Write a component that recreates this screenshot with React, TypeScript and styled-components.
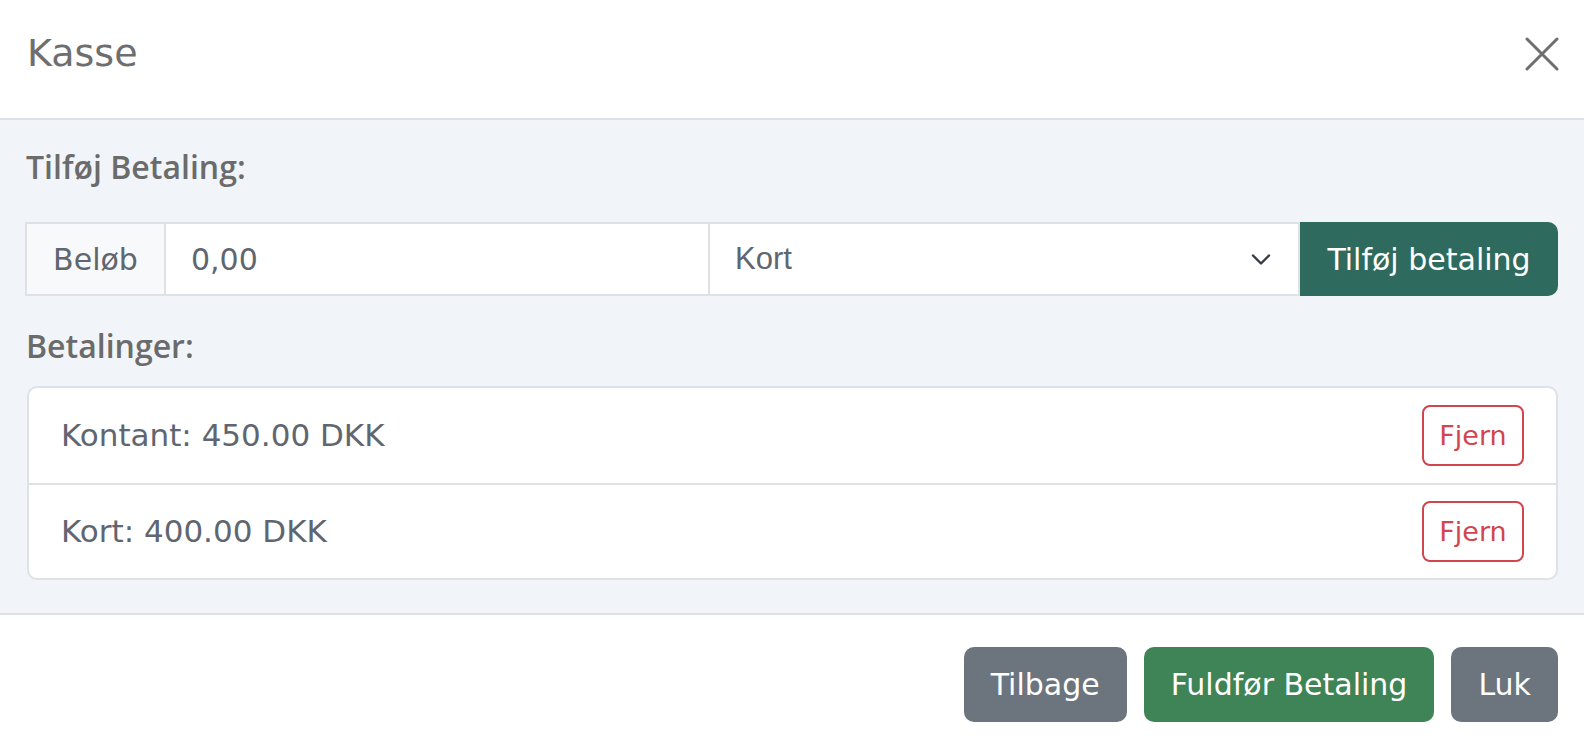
import React from "react";
import styled, { createGlobalStyle } from "styled-components";

const Global = createGlobalStyle`
  html, body { margin: 0; padding: 0; background: #ffffff; }
  body { font-family: "DejaVu Sans", "Noto Sans", sans-serif; overflow: hidden; }
  * { box-sizing: border-box; }
`;

const Modal = styled.div`
  width: 1584px;
  height: 748px;
  display: flex;
  flex-direction: column;
  background: #ffffff;
`;

const Header = styled.header`
  height: 120px;
  flex: 0 0 120px;
  display: flex;
  align-items: center;
  justify-content: space-between;
  padding: 0 25px 10px 27px;
  border-bottom: 2px solid #dee2e7;
`;

const Title = styled.h1`
  margin: 0;
  font-family: "DejaVu Sans", sans-serif;
  font-weight: 400;
  font-size: 38px;
  line-height: 1.2;
  color: #6e6e6e;
`;

const CloseButton = styled.button`
  width: 34px;
  height: 34px;
  padding: 0;
  border: none;
  background: transparent;
  display: flex;
  align-items: center;
  justify-content: center;
  cursor: pointer;
`;

const Body = styled.main`
  flex: 0 0 auto;
  background: #f1f5f9;
  padding: 28px 26px 33px 25px;
  border-bottom: 2px solid #dee2e7;
`;

const Label = styled.div<{ $gap: number }>`
  font-family: "Open Sans", sans-serif;
  font-weight: 600;
  font-size: 32px;
  line-height: 1.2;
  color: #6b6b6b;
  padding-left: 1px;
  margin-bottom: ${(p) => p.$gap}px;
`;

const InputGroup = styled.div`
  display: flex;
  height: 74px;
  margin-bottom: 31px;
`;

const Addon = styled.div`
  flex: 0 0 139px;
  display: flex;
  align-items: center;
  justify-content: center;
  background: #f8f9fa;
  border: 2px solid #dee2e6;
  border-right: none;
  font-size: 30px;
  color: #5f6670;
`;

const AmountInput = styled.div`
  flex: 0 0 544px;
  display: flex;
  align-items: center;
  padding-left: 25px;
  background: #ffffff;
  border: 2px solid #dee2e6;
  border-right: none;
  font-size: 30px;
  color: #5f6670;
`;

const Select = styled.div`
  flex: 1;
  display: flex;
  align-items: center;
  justify-content: space-between;
  padding: 0 27px 0 25px;
  background: #ffffff;
  border: 2px solid #dee2e6;
  font-family: "Liberation Sans", Arial, sans-serif;
  font-size: 31px;
  color: #5f6670;
`;

const Button = styled.button<{ $bg: string }>`
  height: 75px;
  padding: 0 27px;
  border: none;
  border-radius: 10px;
  background: ${(p) => p.$bg};
  color: #ffffff;
  font-family: "DejaVu Sans", sans-serif;
  font-size: 30px;
  white-space: nowrap;
  cursor: pointer;
`;

const GroupButton = styled(Button)`
  height: 74px;
  flex: 0 0 258px;
  border-radius: 0 10px 10px 0;
`;

const List = styled.div`
  margin: 0 0 0 2px;
  background: #ffffff;
  border: 2px solid #dee2e6;
  border-radius: 10px;
  overflow: hidden;
`;

const Row = styled.div`
  height: 95px;
  display: flex;
  align-items: center;
  justify-content: space-between;
  padding: 0 32px 0 32px;
  font-size: 31px;
  color: #5f6670;
  & + & {
    border-top: 2px solid #dee2e6;
  }
`;

const RemoveButton = styled.button`
  height: 61px;
  width: 102px;
  padding: 0;
  border: 2px solid #d1454f;
  border-radius: 8px;
  background: #ffffff;
  color: #d1454f;
  font-family: "DejaVu Sans", sans-serif;
  font-size: 27px;
  cursor: pointer;
`;

const Footer = styled.footer`
  flex: 1;
  display: flex;
  justify-content: flex-end;
  align-items: flex-start;
  gap: 17px;
  padding: 32px 26px 0 0;
`;

const payments = [
  { label: "Kontant: 450.00 DKK" },
  { label: "Kort: 400.00 DKK" },
];

export default function App() {
  return (
    <>
      <Global />
      <Modal>
        <Header>
          <Title>Kasse</Title>
          <CloseButton aria-label="Luk">
            <svg width="34" height="34" viewBox="0 0 34 34">
              <path d="M2 2 L32 32 M32 2 L2 32" stroke="#6e6e6e" strokeWidth="3" strokeLinecap="round" />
            </svg>
          </CloseButton>
        </Header>
        <Body>
          <Label $gap={36}>Tilføj Betaling:</Label>
          <InputGroup>
            <Addon>Beløb</Addon>
            <AmountInput>0,00</AmountInput>
            <Select>
              <span>Kort</span>
              <svg width="20" height="13" viewBox="0 0 20 13">
                <path d="M2 2.5 L10 10.5 L18 2.5" fill="none" stroke="#343a40" strokeWidth="2.4" strokeLinecap="round" strokeLinejoin="round" />
              </svg>
            </Select>
            <GroupButton $bg="#2e6a5d">Tilføj betaling</GroupButton>
          </InputGroup>
          <Label $gap={20}>Betalinger:</Label>
          <List>
            {payments.map((p) => (
              <Row key={p.label}>
                <span>{p.label}</span>
                <RemoveButton>Fjern</RemoveButton>
              </Row>
            ))}
          </List>
        </Body>
        <Footer>
          <Button $bg="#6c757d">Tilbage</Button>
          <Button $bg="#3f8457">Fuldfør Betaling</Button>
          <Button $bg="#6c757d">Luk</Button>
        </Footer>
      </Modal>
    </>
  );
}
